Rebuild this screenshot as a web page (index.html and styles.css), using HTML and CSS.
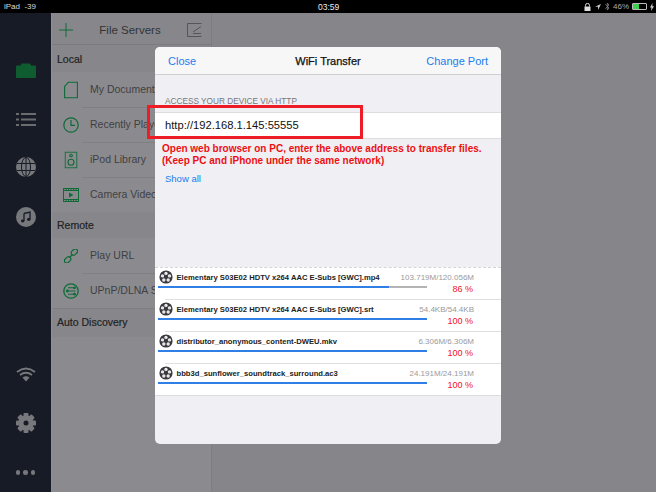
FILE: index.html
```html
<!DOCTYPE html>
<html lang="en">
<head>
    <meta charset="UTF-8">
    <title>WiFi Transfer</title>
    <link rel="stylesheet" href="styles.css">
</head>
<body>
    <svg class="defs" width="0" height="0">
        <symbol id="reel" viewBox="0 0 14 14">
            <circle cx="7" cy="7" r="6.6" fill="#3a3a3e"/>
            <circle cx="7" cy="3.4" r="1.7" fill="#e8e8ea"/>
            <circle cx="10.5" cy="5.9" r="1.7" fill="#e8e8ea"/>
            <circle cx="9.2" cy="10" r="1.7" fill="#e8e8ea"/>
            <circle cx="4.8" cy="10" r="1.7" fill="#e8e8ea"/>
            <circle cx="3.5" cy="5.9" r="1.7" fill="#e8e8ea"/>
        </symbol>
    </svg>

    <div class="status-bar">
        <span class="status-left">iPad &nbsp;-39</span>
        <span class="status-time">03:59</span>
        <div class="status-right">
            <svg width="7" height="8" viewBox="0 0 7 8"><path d="M1.5 3.5V2.4a2 2 0 0 1 4 0v1.100" fill="none" stroke="#ddd" stroke-width="1"/><rect x="0.500" y="3.500" width="6" height="4.500" fill="#ddd"/></svg>
            <svg width="6" height="6" viewBox="0 0 7 7"><path d="M7 0L0 3.300h3.500V7z" fill="#ccc"/></svg>
            <svg width="5" height="9" viewBox="0 0 5 9"><path d="M0.500 2.300L4 6L2.300 8V1L4 3L0.500 6.700" fill="none" stroke="#888" stroke-width="0.800"/></svg>
            <span class="battery-text">46%</span>
            <span class="battery"><span class="battery-fill"></span></span>
            <svg width="4" height="8" viewBox="0 0 4 8"><path d="M2.500 0L0 4.500h1.500L1 8l3-4.800H2.300z" fill="#ccc"/></svg>
        </div>
    </div>

    <div class="app">
        <nav class="sidebar">
            <svg class="nav-folder" width="20" height="15" viewBox="0 0 20 15"><path d="M0 3.500Q0 2.500 1 2.500H4.500L5.500 0.500H14L15 2.500H19Q20 2.500 20 3.500V14Q20 15 19 15H1Q0 15 0 14z" fill="#0e5c2f"/></svg>
            <svg class="nav-list" width="20" height="15" viewBox="0 0 20 15" fill="#6b6c70">
                <rect x="0" y="1" width="3" height="2"/><rect x="5" y="1" width="15" height="2"/>
                <rect x="0" y="6.500" width="3" height="2"/><rect x="5" y="6.500" width="15" height="2"/>
                <rect x="0" y="12" width="3" height="2"/><rect x="5" y="12" width="15" height="2"/>
            </svg>
            <svg class="nav-globe" width="20" height="20" viewBox="0 0 20 20" fill="none" stroke="#171b26" stroke-width="1">
                <circle cx="10" cy="10" r="10" fill="#77787c" stroke="none"/>
                <ellipse cx="10" cy="10" rx="4.500" ry="9.500"/>
                <path d="M10 0v20M1 6.500h18M1 13.500h18"/>
            </svg>
            <svg class="nav-music" width="20" height="20" viewBox="0 0 20 20">
                <circle cx="10" cy="10" r="10" fill="#77787c"/>
                <path d="M8 6.500L14 5V12.500" fill="none" stroke="#171b26" stroke-width="1.300"/>
                <path d="M8 6.500V14" fill="none" stroke="#171b26" stroke-width="1.300"/>
                <ellipse cx="6.700" cy="14" rx="1.700" ry="1.400" fill="#171b26"/>
                <ellipse cx="12.700" cy="12.500" rx="1.700" ry="1.400" fill="#171b26"/>
            </svg>
            <div class="nav-spacer"></div>
            <svg class="nav-wifi" width="20" height="15" viewBox="0 0 20 15" fill="none" stroke="#77787c" stroke-width="1.800">
                <path d="M1 5Q10 -2 19 5M4 8Q10 3.500 16 8"/>
                <path d="M6.500 10.500L10 14.500L13.500 10.500Q10 8 6.500 10.500z" fill="#77787c" stroke="none"/>
            </svg>
            <svg class="nav-gear" width="20" height="20" viewBox="0 0 20 20">
                <g fill="#77787c">
                    <rect x="7.500" y="0" width="5" height="20" rx="1"/>
                    <rect x="7.500" y="0" width="5" height="20" rx="1" transform="rotate(45 10 10)"/>
                    <rect x="7.500" y="0" width="5" height="20" rx="1" transform="rotate(90 10 10)"/>
                    <rect x="7.500" y="0" width="5" height="20" rx="1" transform="rotate(135 10 10)"/>
                    <circle cx="10" cy="10" r="7.500"/>
                </g>
                <circle cx="10" cy="10" r="2.500" fill="#171b26"/>
            </svg>
            <div class="nav-dots"><i></i><i></i><i></i></div>
        </nav>

        <section class="servers">
            <header class="servers-head">
                <svg width="14" height="14" viewBox="0 0 14 14"><path d="M7 0v14M0 7h14" stroke="#0e6b38" stroke-width="1"/></svg>
                <span class="servers-title">File Servers</span>
                <svg width="15" height="14" viewBox="0 0 15 14" fill="none" stroke="#55555a" stroke-width="1"><path d="M14.500 0.500H0.500V13.500H14.500M6 9L14 3.500M6 10.500H14"/></svg>
            </header>

            <h3 class="group">Local</h3>
            <ul class="server-list">
                <li>
                    <svg width="14" height="17" viewBox="0 0 14 17" fill="none" stroke="#0e6b38" stroke-width="1.100"><path d="M4.500 0.600H13.400V16.400H0.600V5z"/></svg>
                    My Documents
                </li>
                <li>
                    <svg width="16" height="16" viewBox="0 0 16 16" fill="none" stroke="#0e6b38" stroke-width="1.200"><circle cx="8" cy="8" r="7.200"/><path d="M8 3v5.300h4"/></svg>
                    Recently Played
                </li>
                <li>
                    <svg width="13" height="17" viewBox="0 0 13 17" fill="none" stroke="#0e6b38" stroke-width="1.100"><rect x="0.600" y="0.600" width="11.800" height="15.800"/><circle cx="6.500" cy="4" r="1.300"/><circle cx="6.500" cy="10.800" r="3"/></svg>
                    iPod Library
                </li>
                <li>
                    <svg width="16" height="14" viewBox="0 0 16 14"><rect width="16" height="14" fill="#0e6b38"/><rect x="1" y="3" width="14" height="8" fill="#8a8a8e"/><path d="M6 4.500L10.500 7L6 9.500z" fill="#0e6b38"/><path d="M1 1.500h14M1 12.500h14" stroke="#8a8a8e" stroke-dasharray="1.500 1"/></svg>
                    Camera Videos
                </li>
            </ul>

            <h3 class="group group-remote">Remote</h3>
            <ul class="server-list">
                <li>
                    <svg width="14" height="14" viewBox="0 0 14 14" fill="none" stroke="#0e6b38" stroke-width="1.200"><rect x="6.800" y="0.800" width="7" height="4.600" rx="2.300" transform="rotate(-42 10.300 3)"/><rect x="0.200" y="8.600" width="7" height="4.600" rx="2.300" transform="rotate(-42 3.700 11)"/><path d="M5.500 8.500L8.500 5.500"/></svg>
                    Play URL
                </li>
                <li>
                    <svg width="16" height="16" viewBox="0 0 16 16" fill="none" stroke="#0e6b38"><circle cx="8" cy="8" r="7.200" stroke-width="1.300"/><path d="M4 8h8.500M5 4.800h6.500M5 11.200h6.500" stroke-width="1.100"/><circle cx="4.300" cy="8" r="1.400" fill="#0e6b38" stroke="none"/><circle cx="11.500" cy="4.800" r="1.400" fill="#0e6b38" stroke="none"/><circle cx="11.500" cy="11.200" r="1.400" fill="#0e6b38" stroke="none"/></svg>
                    UPnP/DLNA Server
                </li>
            </ul>

            <h3 class="group group-auto">Auto Discovery</h3>
        </section>

        <div class="backdrop"></div>
    </div>

    <div class="modal">
        <header class="modal-head">
            <a class="link">Close</a>
            <strong class="modal-title">WiFi Transfer</strong>
            <a class="link link-right">Change Port</a>
        </header>

        <div class="modal-body">
            <p class="section-label">ACCESS YOUR DEVICE VIA HTTP</p>
            <div class="address">http://192.168.1.145:55555</div>
            <p class="hint">Open web browser on PC, enter the above address to transfer files.<br>(Keep PC and iPhone under the same network)</p>
            <a class="show-all">Show all</a>
        </div>

        <ul class="transfers">
            <li class="transfer">
                <svg class="reel" width="14" height="14"><use href="#reel"/></svg>
                <div class="transfer-top">
                    <span class="file-name">Elementary S03E02 HDTV x264 AAC E-Subs [GWC].mp4</span>
                    <span class="file-size">103.719M/120.056M</span>
                </div>
                <div class="track"><div class="fill" style="width: 86%"></div></div>
                <div class="percent">86 %</div>
            </li>
            <li class="transfer">
                <svg class="reel" width="14" height="14"><use href="#reel"/></svg>
                <div class="transfer-top">
                    <span class="file-name">Elementary S03E02 HDTV x264 AAC E-Subs [GWC].srt</span>
                    <span class="file-size">54.4KB/54.4KB</span>
                </div>
                <div class="track"><div class="fill" style="width: 100%"></div></div>
                <div class="percent">100 %</div>
            </li>
            <li class="transfer">
                <svg class="reel" width="14" height="14"><use href="#reel"/></svg>
                <div class="transfer-top">
                    <span class="file-name">distributor_anonymous_content-DWEU.mkv</span>
                    <span class="file-size">6.306M/6.306M</span>
                </div>
                <div class="track"><div class="fill" style="width: 100%"></div></div>
                <div class="percent">100 %</div>
            </li>
            <li class="transfer">
                <svg class="reel" width="14" height="14"><use href="#reel"/></svg>
                <div class="transfer-top">
                    <span class="file-name">bbb3d_sunflower_soundtrack_surround.ac3</span>
                    <span class="file-size">24.191M/24.191M</span>
                </div>
                <div class="track"><div class="fill" style="width: 100%"></div></div>
                <div class="percent">100 %</div>
            </li>
        </ul>
    </div>

    <div class="highlight"></div>
</body>
</html>
```

FILE: styles.css
```css
* {
    box-sizing: border-box;
}

body {
    margin: 0;
    width: 656px;
    height: 492px;
    overflow: hidden;
    display: flex;
    flex-direction: column;
    background: #86868a;
    font-family: "Liberation Sans", Arial, sans-serif;
    color: #333;
}

ul {
    list-style: none;
    margin: 0;
    padding: 0;
}

p, h3 {
    margin: 0;
}

.defs {
    position: absolute;
}

/* status bar */
.status-bar {
    height: 13px;
    flex: none;
    background: #000;
    color: #ddd;
    font-size: 8px;
    display: flex;
    align-items: center;
    justify-content: space-between;
    padding: 0 2px 0 4px;
    position: relative;
}

.status-time {
    position: absolute;
    left: 318px;
    font-size: 8.500px;
    color: #eee;
}

.status-right {
    display: flex;
    align-items: center;
    gap: 4px;
    color: #aaa;
}

.battery-text {
    margin-left: -1px;
}

.battery {
    width: 15px;
    height: 7px;
    border: 1px solid #bbb;
    border-radius: 1px;
    margin: 0 -1px;
    display: block;
}

.battery-fill {
    display: block;
    width: 6px;
    height: 5px;
    background: #3ccf4e;
}

/* main */
.app {
    flex: 1;
    display: flex;
    min-height: 0;
}

.sidebar {
    width: 51px;
    flex: none;
    background-color: #171b26;
    background-image: radial-gradient(#252a36 0.5px, transparent 0.6px);
    background-size: 4px 4px;
    display: flex;
    flex-direction: column;
    align-items: center;
    padding: 50px 0 17px;
}

.sidebar svg {
    flex: none;
}

.nav-folder { margin-bottom: 34px; }
.nav-list { margin-bottom: 30px; }
.nav-globe { margin-bottom: 30px; }
.nav-spacer { flex: 1; }
.nav-wifi { margin-bottom: 31px; }
.nav-gear { margin-bottom: 37px; }

.nav-dots {
    display: flex;
    gap: 3px;
    height: 5px;
}

.nav-dots i {
    width: 4.500px;
    height: 4.500px;
    border-radius: 50%;
    background: #77787c;
}

.servers {
    width: 161px;
    flex: none;
    background: #8b8b8f;
    border-left: 1px solid #8f8f92;
    border-right: 1px solid #7d7d81;
}

.servers-head {
    height: 32px;
    background: #87878b;
    border-bottom: 1px solid #7b7b7f;
    display: flex;
    align-items: center;
    justify-content: space-between;
    padding: 2px 9px 0 7px;
}

.servers-title {
    font-size: 11.500px;
    color: #333;
}

.group {
    font-size: 10.500px;
    font-weight: normal;
    color: #222;
    height: 27px;
    padding: 8px 0 0 5px;
    background: #87878b;
    -webkit-text-stroke: 0.2px #222;
}

.server-list li {
    height: 35px;
    display: flex;
    align-items: center;
    font-size: 10.500px;
    color: #3f3f43;
    white-space: nowrap;
    position: relative;
    padding: 0 0 2px 38px;
}

.server-list li + li::before {
    content: "";
    position: absolute;
    left: 30px;
    right: 0;
    top: 0;
    border-top: 1px solid #808084;
}

.server-list svg {
    position: absolute;
    left: 19px;
    top: 50%;
    transform: translate(-50%, -50%);
}

.group-remote {
    height: 26px;
    padding-top: 7px;
}

.group-auto {
    height: 29px;
    padding-top: 7px;
    border-top: 1px solid #7f7f83;
}

.backdrop {
    flex: 1;
}

/* dialog */
.modal {
    position: absolute;
    left: 155px;
    top: 47px;
    width: 346px;
    height: 397px;
    background: #efeff4;
    border-radius: 5px;
    overflow: hidden;
    display: flex;
    flex-direction: column;
}

.modal-head {
    height: 28px;
    flex: none;
    background: #f7f7f8;
    border-bottom: 1px solid #cfcfd2;
    display: grid;
    grid-template-columns: 1fr auto 1fr;
    align-items: center;
    padding: 0 13px;
    font-size: 11px;
}

.modal-title {
    font-size: 11px;
    font-weight: normal;
    color: #111;
    -webkit-text-stroke: 0.25px #111;
}

.link {
    color: #1a7df0;
}

.link-right {
    text-align: right;
}

.modal-body {
    height: 192px;
    flex: none;
    padding-top: 22px;
}

.section-label {
    font-size: 8.250px;
    color: #77777b;
    padding-left: 10px;
    height: 15px;
    line-height: 10px;
}

.address {
    height: 27px;
    background: #fff;
    border-top: 1px solid #ddd;
    border-bottom: 1px solid #ddd;
    font-size: 11.200px;
    color: #111;
    line-height: 25px;
    padding-left: 10px;
}

.hint {
    font-size: 10px;
    font-weight: bold;
    line-height: 12px;
    color: #ee0f12;
    padding: 4px 0 0 7px;
    white-space: nowrap;
}

.show-all {
    display: block;
    font-size: 9.500px;
    color: #1a7df0;
    padding: 6px 0 0 10px;
}

.transfers {
    background: #fff;
    border-bottom: 1px solid #ddd;
}

.transfer {
    height: 32px;
    position: relative;
    padding: 0 27px 0 21.500px;
    border-top: 1px solid transparent;
}

.transfer:first-child {
    border-top: 1px dashed #d4d4d6;
}

.transfer + .transfer::before {
    content: "";
    position: absolute;
    left: 10px;
    right: 0;
    top: -1px;
    border-top: 1px solid #dedee0;
}

.reel {
    position: absolute;
    left: 4px;
    top: 2px;
}

.transfer-top {
    display: flex;
    justify-content: space-between;
    align-items: center;
    height: 18px;
    white-space: nowrap;
}

.file-name {
    font-size: 7.650px;
    font-weight: bold;
    color: #222;
}

.file-size {
    font-size: 8px;
    color: #99999c;
}

.track {
    position: absolute;
    left: 3px;
    top: 18px;
    width: 269px;
    height: 2px;
    background: #b4b4b7;
}

.fill {
    height: 100%;
    background: #2f7fe6;
}

.percent {
    position: absolute;
    right: 28px;
    top: 16px;
    font-size: 9px;
    line-height: 11px;
    color: #f0141c;
}

/* annotation drawn over the screenshot */
.highlight {
    position: absolute;
    left: 147px;
    top: 105px;
    width: 216px;
    height: 34px;
    border: 3px solid #ee1c25;
}
```
